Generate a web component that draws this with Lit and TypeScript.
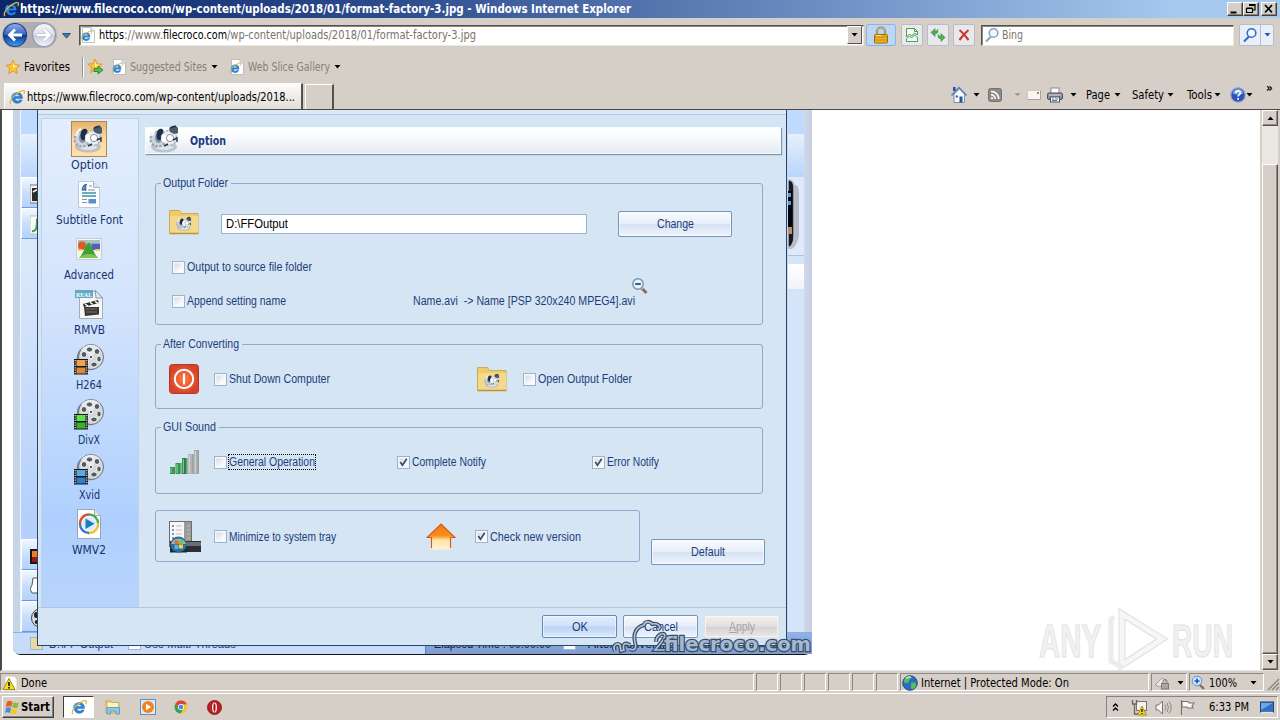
import { LitElement, html, svg, css } from 'lit';
import type { TemplateResult } from 'lit';
import { customElement, property } from 'lit/decorators.js';
import { classMap } from 'lit/directives/class-map.js';

// Text squeezed or stretched to the given number of pixels
@customElement('fit-text')
export class FitText extends LitElement {
    @property({ type: Number }) w = 0;

    static styles = css`
        :host {
            display: inline-block;
            white-space: pre;
            flex: none;
        }
        span {
            display: inline-block;
            transform-origin: 0 50%;
        }
    `;

    firstUpdated() {
        const span = this.renderRoot.querySelector('span')!;
        const natural = span.getBoundingClientRect().width;
        if (this.w && natural) {
            this.style.width = `${this.w}px`;
            span.style.transform = `scaleX(${this.w / natural})`;
        }
    }

    render() {
        return html`<span><slot></slot></span>`;
    }
}

const t = (text: string, w: number) => html`<fit-text w=${w}>${text}</fit-text>`;

const arrow = html`<svg class="arrow" width="7" height="4" viewBox="0 0 7 4"><path d="M0.5 0h6L3.5 3.6z" fill="currentColor"/></svg>`;

const ieMark = svg`
    <path d="M13.400 9.600H6c.2 1.700 1.200 2.500 2.500 2.500 1 0 1.700-.4 2.100-1.100h2.500c-.7 2.200-2.500 3.300-4.700 3.300-3.200 0-5.300-2.100-5.300-5.300s2.200-5.500 5.400-5.500c3.400 0 5.200 2.500 4.900 6.100zM6.100 7.500h4.300c-.1-1.200-.8-1.900-2.100-1.900-1.200 0-2 .7-2.200 1.900z" fill="#2a86e0" stroke="#11509f" stroke-width=".4"/>
    <path d="M2 15c-2-1.500.5-6.500 5-9.800C11 2.200 15 .600 15.500 2.200c.2.800-.2 1.800-.9 2.900" fill="none" stroke="#e8b92c" stroke-width="1.300"/>
    <path d="M5 4.500C3.500 5.500 2.800 7.500 3 9.500" fill="none" stroke="#49a8ee" stroke-width="1.500"/>`;

const ieIcon = (size = 16) => html`<svg width=${size} height=${size} viewBox="0 0 16 16">${ieMark}</svg>`;

const pageIe = html`
    <svg width="16" height="16" viewBox="0 0 16 16">
        <path d="M2.500.500H11L14.500 4v11.500h-12z" fill="#fff" stroke="#a9b6c4" stroke-width=".8"/>
        <path d="M11 .500V4h3.500" fill="#e4e8ee" stroke="#a9b6c4" stroke-width=".8"/>
        <g transform="translate(0 3) scale(.75)">${ieMark}</g>
    </svg>`;

const star = svg`<path d="M8 1l2.100 4.700 5 .5-3.800 3.400 1.100 5L8 12l-4.400 2.600 1.100-5L.900 6.200l5-.5z" fill="#ffc234" stroke="#d9932a" stroke-width=".8"/><path d="M8 3l1.300 3.500 3.200.3L8 9z" fill="#fff0a8"/>`;

const navBack = html`
    <svg width="26" height="26" viewBox="0 0 26 26">
        <defs>
            <linearGradient id="nav-back" x1="0" y1="0" x2="0" y2="1">
                <stop offset="0" stop-color="#8eb0ea"/><stop offset=".48" stop-color="#3566c4"/>
                <stop offset=".52" stop-color="#0c3796"/><stop offset="1" stop-color="#3fa4f0"/>
            </linearGradient>
        </defs>
        <circle cx="13" cy="13" r="11.500" fill="url(#nav-back)" stroke="#1f3e80" stroke-width="1.200"/>
        <path d="M20 13H8M13 7.500L7.500 13l5.500 5.500" fill="none" stroke="#fff" stroke-width="2.800"/>
    </svg>`;

const navForward = html`
    <svg width="26" height="26" viewBox="0 0 26 26">
        <defs>
            <linearGradient id="nav-fwd" x1="0" y1="0" x2="0" y2="1">
                <stop offset="0" stop-color="#f6f7fa"/><stop offset=".48" stop-color="#dcdfe8"/>
                <stop offset=".52" stop-color="#c3c9d6"/><stop offset="1" stop-color="#f6f7fb"/>
            </linearGradient>
        </defs>
        <circle cx="13" cy="13" r="11.500" fill="url(#nav-fwd)" stroke="#8f99ad" stroke-width="1.200"/>
        <path d="M6 13h12M13 7.500l5.500 5.500-5.500 5.500" fill="none" stroke="#aab1c0" stroke-width="3.600"/>
        <path d="M6 13h12M13 7.500l5.500 5.500-5.500 5.500" fill="none" stroke="#fff" stroke-width="2.600"/>
    </svg>`;

const lock = html`
    <svg width="16" height="18" viewBox="0 0 16 18">
        <path d="M4 9V5.500a4 4 0 0 1 8 0V9" fill="none" stroke="#8a7a50" stroke-width="2.200"/>
        <path d="M4 9V5.500a4 4 0 0 1 8 0V9" fill="none" stroke="#d9cfa8" stroke-width=".8"/>
        <rect x="1.500" y="8.500" width="13" height="8.500" rx="1" fill="#eeb321" stroke="#9c6c0c"/>
        <path d="M2 11h12M2 14h12" stroke="#c4860f"/>
        <path d="M3 9.500h5" stroke="#ffe88a"/>
    </svg>`;

const compat = html`
    <svg width="16" height="16" viewBox="0 0 16 16">
        <path d="M2.500 1.500h8l3 3V8l-3-2-3 3-2-2-3 3zM2.500 12l3-3 2 2 3-3 3 2.500v4h-11z" fill="#f2fbf2" stroke="#4b9c55"/>
        <path d="M10.500 1.500v3h3" fill="none" stroke="#4b9c55"/>
    </svg>`;

const refresh = html`
    <svg width="16" height="16" viewBox="0 0 16 16" fill="#4fae50" stroke="#247a30" stroke-width=".5">
        <path d="M5 1.500L1 5.500l4 4v-2.700c1.200 0 2-.3 2.800-1.300V2.500C7 3.800 6.300 4.200 5 4.200z"/>
        <path d="M11 6.500l4 4-4 4v-2.700c-1.200 0-2-.3-2.800-1.300V7.500C9 8.800 9.700 9.200 11 9.200z"/>
    </svg>`;

const stop = html`<svg width="14" height="14" viewBox="0 0 14 14"><path d="M2.500 2c3 2.500 6 6 9 10M11.500 2C8 5 5 8.500 2.500 12" stroke="#c83a3a" stroke-width="2.200" fill="none"/></svg>`;

const lens = (color: string) => html`
    <svg width="16" height="16" viewBox="0 0 16 16">
        <path d="M7 9.500L2 14.500" stroke=${color} stroke-width="2.200"/>
        <circle cx="9.500" cy="6" r="4.300" fill="#f0f7ff" stroke=${color} stroke-width="1.600"/>
    </svg>`;

const home = html`
    <svg width="18" height="18" viewBox="0 0 18 18">
        <path d="M4 8v8.500h10.500V8L9.500 3z" fill="#f5f8fc" stroke="#7d90b0"/>
        <path d="M1.500 9.500l7.500-8 7.500 8" fill="none" stroke="#5f7cb0" stroke-width="1.500"/>
        <rect x="3" y="1" width="2.500" height="4" fill="#2b4fa0"/>
        <rect x="9.500" y="10.500" width="3" height="6" fill="#1c5d94"/>
        <rect x="5.800" y="9.500" width="2" height="2" fill="#2b4fa0"/>
    </svg>`;

const rss = html`
    <svg width="14" height="14" viewBox="0 0 14 14">
        <rect x=".5" y=".5" width="13" height="13" rx="2" fill="#8d8b88" stroke="#75726e"/>
        <path d="M3 3.500A7.500 7.500 0 0 1 10.800 11M3 6.800A4.200 4.200 0 0 1 7.300 11" fill="none" stroke="#fff" stroke-width="1.500"/>
        <circle cx="4" cy="10.200" r="1.100" fill="#fff"/>
    </svg>`;

const mail = html`
    <svg width="14" height="10" viewBox="0 0 14 10">
        <rect x=".5" y=".5" width="13" height="9" fill="#f8f5f3" stroke="#cfc9c6"/>
        <path d="M.500 9.500h13v-9" fill="none" stroke="#a8a29e"/>
        <rect x="10" y="2" width="2" height="2" fill="#d06a6a"/>
    </svg>`;

const printer = html`
    <svg width="16" height="16" viewBox="0 0 16 16">
        <rect x="4" y="1" width="8" height="6" fill="#fff" stroke="#8a8a92"/>
        <rect x=".5" y="6" width="15" height="6.500" rx="1.500" fill="#8f9097" stroke="#4e4f57"/>
        <path d="M2 8h12" stroke="#d5d7dc"/>
        <rect x="3.500" y="10" width="9" height="5" fill="#fff" stroke="#50525c"/>
        <path d="M5 12h2m1 0h3M5 13.500h5" stroke="#3c7ac0"/>
    </svg>`;

const help = html`
    <svg width="16" height="16" viewBox="0 0 16 16">
        <circle cx="8" cy="8" r="7.200" fill="#2f55b4" stroke="#8fa2cf" stroke-width="1.200"/>
        <path d="M2.500 6a5.800 5.800 0 0 1 11 0C11 8 5 8 2.500 6z" fill="#7d9de0"/>
        <path d="M5.700 6.200c0-3.200 4.700-3.100 4.700-.3 0 1.700-2.300 1.700-2.300 3.500M8.100 11v1.800" fill="none" stroke="#fff" stroke-width="1.700"/>
    </svg>`;

const gears = svg`
    <ellipse cx="15" cy="23" rx="13" ry="5.500" fill="#b4bcc5" opacity=".85"/>
    <ellipse cx="15" cy="23" rx="9" ry="3" fill="#dfe4e9"/>
    <circle cx="9" cy="15" r="7.500" fill="#cdd3da" stroke="#98a1ac" stroke-dasharray="2.500 1.500" stroke-width="2"/>
    <ellipse cx="9.500" cy="14" rx="3.500" ry="5" fill="#7f93a8"/>
    <path d="M9 6c4-3 7 0 5 5s-2 6-5 5c-2-2-2-7 0-10z" fill="#1b2f4a"/>
    <path d="M3 12c1-4 3-6 5-7" stroke="#f7f9fb" stroke-width="2" fill="none"/>
    <circle cx="20" cy="14" r="7.500" fill="#e9edf1" stroke="#a9b1bb" stroke-dasharray="2.500 1.500" stroke-width="1.600"/>
    <path d="M13 10l5 2-2 7-4-3z" fill="#fff"/>
    <circle cx="21" cy="14" r="3.600" fill="#fff" stroke="#8894a1"/>
    <path d="M20 5c2-4 7-4 9-1v5c-3 2-6 0-8-1z" fill="#4a5b6d"/>
    <path d="M21 4l6-2M24 16l4-2v4M19 20l-4 2" stroke="#25384d" stroke-width="1.400" fill="none"/>`;

const gearsIcon = html`<svg width="32" height="30" viewBox="0 0 32 30">${gears}</svg>`;

const subtitleIcon = html`
    <svg width="22" height="27" viewBox="0 0 22 27">
        <path d="M.500.500h15l6 6v20H.500z" fill="#fbfdff" stroke="#c2c9d6"/>
        <path d="M15.500.500v6h6" fill="#dde4ee" stroke="#a8b2c0"/>
        <path d="M9 3.500c-4 0-5 5-4.500 5.500 2 0 3-2 3-5v6" fill="none" stroke="#3e6fa5" stroke-width="1.600"/>
        <path d="M11 5h3M10 9h7" stroke="#7b93ad"/>
        <path d="M4 12h14M4 15h14" stroke="#3f9199" stroke-width="1.400"/>
        <path d="M4 18.500h5M4 21.500h5" stroke="#8796a8"/>
        <rect x="10.500" y="18" width="7.500" height="4.500" fill="#5a8fc9"/>
    </svg>`;

const advancedIcon = html`
    <svg width="26" height="22" viewBox="0 0 26 22">
        <rect x=".5" y=".5" width="25" height="21" fill="#f4f8ea" stroke="#c3ccd8"/>
        <rect x="2" y="2" width="22" height="10" fill="#82a9e6"/>
        <path d="M2 2h22v3H2z" fill="#a8c4b4"/>
        <circle cx="6" cy="7.500" r="4" fill="#e05a26"/>
        <rect x="16" y="6" width="8" height="6" fill="#5659cf"/>
        <path d="M3 20c4-3 7-15 10-15 3 1 5 12 9 15z" fill="#3fa033"/>
        <path d="M3 20c3-3 6-4 10-4s7 1 9 4z" fill="#80c455"/>
        <path d="M2 12h4M19 12h5" stroke="#ecd158" stroke-width="2"/>
    </svg>`;

const rmvbIcon = html`
    <svg width="28" height="31" viewBox="0 0 28 31">
        <path d="M4.500 2.500h17l6 6v21h-23z" fill="#f6f6f4" stroke="#a6adb5"/>
        <path d="M20 1l7.500 8H21z" fill="#dfe7ec" stroke="#8f9ba6"/>
        <rect x="0" y="1" width="18" height="8" fill="#65a8c6"/>
        <text class="tiny" x="1" y="7.800" textLength="16" lengthAdjust="spacingAndGlyphs">REAL</text>
        <path d="M8 15l15-4 .8 3-15 4z" fill="#2b2b2b"/>
        <path d="M10 15l3 2M15 13.500l3 2M20 12.300l3 2" stroke="#fff" stroke-width="1.500"/>
        <path d="M9 18h15v7.500L10 27z" fill="#3a3635"/>
        <path d="M11 20h11M11 23h11" stroke="#7b736c"/>
    </svg>`;

const reelIcon = (color: string, dark: string) => html`
    <svg width="32" height="32" viewBox="0 0 32 32">
        <circle cx="16" cy="15" r="12.300" fill="#7d858f"/>
        <circle cx="18" cy="14" r="12.500" fill="#d3d6da" stroke="#6c737b"/>
        <path d="M8 7a12 12 0 0 1 19-1l-9 8z" fill="#e6e9ec"/>
        <g fill="#555b63" stroke="#fff" stroke-width=".9">
            <ellipse cx="16.500" cy="6.500" rx="3.200" ry="2.600"/><ellipse cx="24" cy="8.500" rx="2.800" ry="3"/>
            <ellipse cx="11" cy="11.500" rx="2.800" ry="3"/><ellipse cx="26" cy="16" rx="2.300" ry="3"/>
            <ellipse cx="21" cy="21.500" rx="3.200" ry="2.600"/><ellipse cx="13" cy="19" rx="2.600" ry="2.600"/>
        </g>
        <circle cx="18" cy="14" r="1.800" fill="#555" stroke="#fff"/>
        <rect x="1" y="16" width="14" height="15.500" fill="#15181c"/>
        <rect x="3.500" y="17" width="9" height="6" fill=${color}/><rect x="3.500" y="24.500" width="9" height="6" fill=${dark}/>
        <path d="M2.200 17v14M13.800 17v14" stroke="#e8e8e8" stroke-dasharray="1.200 1.200" stroke-width="1.200"/>
    </svg>`;

const wmvIcon = html`
    <svg width="24" height="30" viewBox="0 0 24 30">
        <path d="M.500.500h17l6 6v23H.500z" fill="#fcfdff" stroke="#9da4ae"/>
        <path d="M17.500.500v6h6" fill="#dbe2ea" stroke="#a6aeb9"/>
        <g fill="none" stroke-width="2.400">
            <path d="M3 15a9 9 0 0 1 9-9.500" stroke="#d8502c"/><path d="M12 5.500a9 9 0 0 1 9 9" stroke="#4fa653"/>
            <path d="M21 14.500a9 9 0 0 1-9 9.500" stroke="#f2c330"/><path d="M12 24a9 9 0 0 1-9-9" stroke="#3f6fd0"/>
        </g>
        <circle cx="12" cy="14.700" r="7" fill="#d9edfb"/>
        <path d="M8.500 9.500l9 5.200-9 5.300z" fill="#1f7ac4"/>
    </svg>`;

const folderIcon = html`
    <svg class="folder" width="30" height="26" viewBox="0 0 30 26">
        <path d="M.500 24V1.500h10l2 3h16.500V24z" fill="#f0cb6c" stroke="#cfaa55"/>
        <path d="M1 7h28v17.500H1z" fill="#f5d98a"/>
        <path d="M.500 24.500h29" stroke="#b9923f" stroke-width="1.500"/>
        <g transform="translate(7 7) scale(.52)">${gears}</g>
    </svg>`;

const powerIcon = html`
    <svg width="30" height="30" viewBox="0 0 30 30">
        <defs><radialGradient id="pw"><stop offset="0" stop-color="#ff7b45"/><stop offset="1" stop-color="#d9412a"/></radialGradient></defs>
        <rect x=".5" y=".5" width="29" height="29" rx="3" fill="url(#pw)" stroke="#a93a2a"/>
        <circle cx="15" cy="15" r="9.200" fill="none" stroke="#fff" stroke-width="2"/>
        <path d="M15 9.500v11" stroke="#fff" stroke-width="2.200"/>
    </svg>`;

const signalIcon = html`
    <svg width="30" height="26" viewBox="0 0 30 26">
        <rect x="1" y="18" width="4" height="7" fill="#2d9a4c"/><rect x="6.500" y="14" width="5" height="11" fill="#2d9a4c"/>
        <rect x="13" y="9" width="4.500" height="16" fill="#1f8740"/><rect x="19" y="5" width="4.500" height="20" fill="#b3b5b4"/>
        <rect x="25" y="1" width="4.500" height="24" fill="#a9abaa"/>
        <path d="M2 24v-5M8 24v-9M14.300 24V10" stroke="#8fdb9d"/>
        <path d="M20.300 24V6M26.300 24V2" stroke="#dcdddd"/>
        <path d="M5.500 25v-7M12 25V14M18 25V9M24 25V5M30 25V1" stroke="#6b7a70"/>
    </svg>`;

const trayIcon = html`
    <svg width="34" height="33" viewBox="0 0 34 33">
        <rect x="1.500" y="1.500" width="22" height="25" fill="#9a9a9a" stroke="#6e6e6e"/>
        <rect x="2" y="2" width="14" height="24" fill="#f7f7f7"/>
        <path d="M4 6h2M4 10h2M4 14h2M4 18h2" stroke="#5a6fc0" stroke-width="1.300"/>
        <path d="M8 6h6M8 10h6M8 14h6M8 18h6M19 6h3M19 10h3M19 14h3M19 18h3" stroke="#c2c2c2"/>
        <rect x="2" y="21" width="31" height="11" fill="#2c2f33"/><path d="M16 22h17v4H16z" fill="#6b6e72"/>
        <circle cx="10.500" cy="24.500" r="8" fill="#2d6f9b"/><path d="M3 24a8 8 0 0 1 15 0z" fill="#8fb9c8"/>
        <path d="M2 32.500v-5c4 6 13 6 17 0v5z" fill="#132c3c"/>
        <rect x="6.500" y="20.500" width="4" height="4" fill="#e8692c"/><rect x="11" y="20" width="4" height="4" fill="#7fc243"/>
        <rect x="6.500" y="25" width="4" height="4" fill="#4fb0e8"/><rect x="11" y="24.500" width="4" height="4" fill="#f7d139"/>
    </svg>`;

const upIcon = html`
    <svg width="30" height="28" viewBox="0 0 30 28">
        <defs>
            <linearGradient id="up" x1="0" y1="0" x2="0" y2="1">
                <stop offset="0" stop-color="#f07a14"/><stop offset=".45" stop-color="#fb8c1c"/>
                <stop offset=".62" stop-color="#ffe6a6"/><stop offset=".9" stop-color="#fff0cc"/><stop offset="1" stop-color="#f3ebe0"/>
            </linearGradient>
        </defs>
        <path d="M15 1L29 14.500h-4.500V27h-19V14.500H1z" fill="url(#up)"/>
        <path d="M5.500 25V14.500H1L15 1l14 13.500h-4.500V25" fill="none" stroke="#d05a16" stroke-width="1.100"/>
    </svg>`;

const zoomOut = html`
    <svg class="cursor" width="18" height="18" viewBox="0 0 18 18">
        <path d="M10.500 11l5 5" stroke="#8a6a50" stroke-width="2.800"/>
        <path d="M10.200 10.400l1.600 1.600" stroke="#d8d2c4" stroke-width="1.600"/>
        <circle cx="7" cy="7" r="5.200" fill="#e3f3fc" stroke="#7b93ab" stroke-width="1.400"/>
        <path d="M4.200 7h5.600" stroke="#1f4c8c" stroke-width="1.800"/>
    </svg>`;

const warning = html`
    <svg width="16" height="16" viewBox="0 0 16 16">
        <path d="M3 1h9l3 3v11H3z" fill="#fff" stroke="#c5c2bb" stroke-width=".8"/>
        <path d="M7 3.500l6 11H1z" fill="#f7dc1f" stroke="#a08c0a"/>
        <path d="M7 7v4M7 12v1.500" stroke="#111" stroke-width="1.600"/>
    </svg>`;

const globe = html`
    <svg width="16" height="16" viewBox="0 0 16 16">
        <circle cx="8" cy="8" r="7.300" fill="#2a6cc2" stroke="#2b4c86"/>
        <path d="M2 5c2-4 6-4 7-3 1 2-2 2-2 4s-3 3-5 1zM9 8c3-2 6 0 5 3s-4 4-5 2 1-3 0-5z" fill="#4fc05c"/>
        <path d="M4 3.500c2-2 5-1.500 5-1" stroke="#c7f0d0" fill="none" stroke-width="1.400"/>
    </svg>`;

const flagLogo = html`
    <svg width="15" height="15" viewBox="0 0 15 15">
        <path d="M2 1.500c2-1 3.500-.8 5.500.3L6.300 7C4.500 6 3 6 .8 6.800z" fill="#ee5b26"/>
        <path d="M8.300 2.200c2 1 3.500 1 5.500.2L12.600 7.500c-2 .8-3.500.7-5.500-.2z" fill="#86bf3b"/>
        <path d="M1.100 7.800c2-.9 3.200-.8 5 .3l-1.200 5C3.500 12 2 12 0 12.900z" fill="#3e8fe0"/>
        <path d="M6.900 8.500c2 1 3.600 1 5.500.2l-1.200 5c-2 .8-3.600.7-5.500-.3z" fill="#f9c623"/>
    </svg>`;

const explorerIcon = html`
    <svg width="16" height="16" viewBox="0 0 16 16">
        <path d="M1 2h5l1 1.500h7V14H1z" fill="#f2d77a" stroke="#c2a048" stroke-width=".8"/>
        <path d="M3 4h10v4H3z" fill="#fff3b5"/><path d="M2 8.500h12.500V15H11v-3H5.500v3H2z" fill="#8cc8ea" stroke="#4b95c2" stroke-width=".8"/>
    </svg>`;

const wmpIcon = html`
    <svg width="16" height="16" viewBox="0 0 16 16">
        <rect x=".5" y=".5" width="15" height="15" fill="#d9ecfb" stroke="#5b92c9"/>
        <circle cx="8" cy="8" r="6" fill="#f28418"/><path d="M6 4.800L11.200 8 6 11.200z" fill="#fff"/>
    </svg>`;

const chromeIcon = html`
    <svg width="14" height="14" viewBox="0 0 14 14">
        <circle cx="7" cy="7" r="6.500" fill="#f3c52e"/>
        <path d="M1.300 4A6.500 6.500 0 0 1 12.900 4.300L7 4.500 4.200 8z" fill="#db4437"/>
        <path d="M1.300 4A6.500 6.500 0 0 0 6.500 13.500L9.200 9 4.500 8.300z" fill="#2ca35a"/>
        <circle cx="7" cy="7" r="3" fill="#fff"/><circle cx="7" cy="7" r="2.300" fill="#4a87e8"/>
    </svg>`;

const operaIcon = html`
    <svg width="15" height="15" viewBox="0 0 15 15">
        <circle cx="7.500" cy="7.500" r="7" fill="#bf1f23" stroke="#7c1013" stroke-width=".8"/>
        <ellipse cx="7.500" cy="7.500" rx="2.400" ry="5" fill="#fff"/><ellipse cx="7.500" cy="7.500" rx="1.100" ry="4.200" fill="#9c1518"/>
    </svg>`;

const SIDEBAR: { label: string; w: number; icon: TemplateResult }[] = [
    { label: 'Option', w: 37, icon: gearsIcon },
    { label: 'Subtitle Font', w: 67, icon: subtitleIcon },
    { label: 'Advanced', w: 50, icon: advancedIcon },
    { label: 'RMVB', w: 31, icon: rmvbIcon },
    { label: 'H264', w: 26, icon: reelIcon('#f2a24c', '#d98a3a') },
    { label: 'DivX', w: 22, icon: reelIcon('#5fe04c', '#37b32c') },
    { label: 'Xvid', w: 21, icon: reelIcon('#5aa9e6', '#2f7fc4') },
    { label: 'WMV2', w: 34, icon: wmvIcon }
];

@customElement('app-root')
export class AppRoot extends LitElement {
    static styles = css`
        :host {
            display: flex;
            flex-direction: column;
            width: 1280px;
            height: 720px;
            overflow: hidden;
            background: #d5cfc7;
            font: 11.5px/14px 'DejaVu Sans Condensed', 'DejaVu Sans', sans-serif;
            color: #000;
        }
        * {
            box-sizing: border-box;
        }
        svg {
            display: block;
            flex: none;
        }
        .row {
            display: flex;
            align-items: center;
        }
        .titlebar {
            height: 18px;
            flex: none;
            padding: 0 3px;
            color: #fff;
            font-weight: bold;
            background: linear-gradient(90deg, #0b2669, #2c4b8d 30%, #6e90c4 65%, #a5c9ef 92%);
        }
        .titlebar .title {
            margin-left: 1px;
            flex: 1;
        }
        .winbtn {
            width: 16px;
            height: 14px;
            background: #d5cfc7;
            border: 1px solid;
            border-color: #fff #404040 #404040 #fff;
            box-shadow: inset -1px -1px #86827c;
        }
        .winbtn.close {
            margin-left: 2px;
        }
        .nav {
            height: 32px;
            flex: none;
            padding: 2px 6px 0 2px;
        }
        .circles {
            width: 55px;
            gap: 3px;
            border-radius: 13px;
            background: #b0aeb2;
        }
        .nav > .arrow {
            color: #1f4a80;
            margin: 2px 8px 0 5px;
        }
        .address,
        .search {
            height: 21px;
            background: #fff;
            border: 1px solid;
            border-color: #55524d #eae6e0 #eae6e0 #55524d;
            box-shadow: inset 1px 1px #8a8680;
            color: #77736d;
        }
        .address {
            width: 787px;
            padding: 0 1px 0 0;
        }
        .address b {
            font-weight: normal;
            color: #000;
        }
        .address .url {
            flex: 1;
            margin-left: 3px;
        }
        .combo {
            width: 15px;
            height: 18px;
            display: grid;
            place-items: center;
            color: #000;
            background: #d5cfc7;
            border: 1px solid;
            border-color: #fff #55524d #55524d #fff;
        }
        .tool {
            width: 22px;
            height: 22px;
            margin-left: 4px;
            display: grid;
            place-items: center;
            background: #e9e9ec;
            border: 1px solid #b7bccb;
            border-radius: 2px;
        }
        .tool.lock {
            width: 30px;
            margin-left: 2px;
            margin-right: 1px;
            background: #bdd6f5;
            border-color: #8fb4e4;
        }
        .search {
            width: 254px;
            margin-left: 6px;
            padding-left: 2px;
            gap: 2px;
        }
        .go {
            margin-left: 5px;
            width: 35px;
            height: 22px;
            display: grid;
            grid-template-columns: 20px 1px 1fr;
            place-items: center;
            background: #e9eef7;
            border: 1px solid #b7bccb;
            border-radius: 2px;
            color: #1f5cb8;
        }
        .go i {
            width: 1px;
            height: 20px;
            background: #b7bccb;
        }
        .favorites {
            height: 32px;
            flex: none;
            padding: 1px 5px 0;
            color: #86817b;
        }
        .favorites .dark {
            color: #000;
            margin-left: 3px;
        }
        .favorites .arrow {
            color: #000;
            margin-left: 4px;
        }
        .favorites .first {
            margin: 0 3px 0 7px;
        }
        .favorites .second {
            margin: 0 3px 0 11px;
        }
        .sep {
            width: 2px;
            height: 20px;
            margin: 0 3px 0 12px;
            background: #96928c;
            border-right: 1px solid #fff;
        }
        .tabs {
            height: 27px;
            flex: none;
            padding: 1px 6px 0 4px;
            justify-content: space-between;
        }
        .strip {
            display: flex;
            height: 26px;
            gap: 2px;
        }
        .tab {
            width: 299px;
            padding: 0 0 0 4px;
            gap: 2px;
            background: linear-gradient(#fdfcfb, #e2ded8);
            border: 1px solid #fff;
            border-right: 2px solid #55524d;
            border-bottom: 0;
        }
        .newtab {
            width: 29px;
            margin-top: 1px;
            border: 1px solid #fff;
            border-right: 2px solid #55524d;
            border-bottom: 0;
        }
        .cmds {
            display: grid;
            grid-template-columns: 23px 15px 26px 13px 20px 23px 16px 28px 18px 35px 20px 27px 16px 16px 20px 8px;
            align-items: center;
            margin-top: -3px;
        }
        .cmds .dim {
            color: #a09b94;
        }
        .cmds .more {
            margin-top: -14px;
        }
        .browser {
            height: 562px;
            flex: none;
            display: flex;
            background: #fff;
            border: solid #4c4a46;
            border-width: 1px 0 0 2px;
            border-bottom: 1px solid #e8e5df;
            position: relative;
            overflow: hidden;
        }
        .scroll {
            width: 16px;
            margin-left: auto;
            margin-right: 2px;
            height: 560px;
            background: #ebe8e4;
            display: flex;
            flex-direction: column;
            outline: 2px solid #d5cfc7;
        }
        .sbtn {
            height: 16px;
            display: grid;
            place-items: center;
            background: #d5cfc7;
            border: 1px solid;
            border-color: #fff #55524d #55524d #fff;
            box-shadow: inset -1px -1px #908c86;
        }
        .sbtn.up svg {
            transform: rotate(180deg);
        }
        .thumb {
            margin-top: 38px;
            flex: 1;
            background: #d5cfc7;
            border: 1px solid;
            border-color: #fff #55524d #55524d #fff;
            box-shadow: inset -1px -1px #908c86;
        }

        /* Main window behind the dialog */
        .shot {
            width: 799px;
            height: 545px;
            margin-left: 11px;
            flex: none;
            display: grid;
            grid-template: 522px 22px / 7px 18px 1fr 16px 8px;
            background: #c5d5ee;
            border-bottom: 1px solid #10141c;
            font-family: 'Liberation Sans', Arial, sans-serif;
            font-size: 12px;
            color: #1f3f80;
            position: relative;
            border-radius: 0 0 8px 8px;
        }
        .frame {
            background: #c6d4e8;
        }
        .frame.right {
            background: linear-gradient(90deg, #d0d8ea, #c4cde3);
        }
        .left,
        .right-pane {
            display: flex;
            flex-direction: column;
        }
        .left {
            border-left: 1px solid #edf4ff;
            background: linear-gradient(#dbe8fa, #dbe8fa 30%, #b4d0fb 78%);
        }
        .cap {
            height: 24px;
            background: #c0dafd;
        }
        .band {
            height: 43px;
            background: linear-gradient(#e6f0fd, #b9d5fb);
        }
        .cat {
            height: 31px;
            padding: 6px 0 0 8px;
            overflow: hidden;
            background: linear-gradient(#f2f7fe, #c9dffc 50%, #b5d2fb);
            border: 1px solid #fff;
            border-bottom-color: #6f9bd8;
        }
        .gap {
            flex: 1;
        }
        .right-pane {
            grid-column: 4;
            background: #d5e4f8;
        }
        .phone {
            height: 79px;
            background: #dfe9f8;
            border-bottom: 1px solid #a9c2e6;
            overflow: hidden;
        }
        .rtab {
            height: 25px;
            margin-top: 8px;
            background: linear-gradient(#fff, #eff4fb);
        }
        .main-status {
            grid-column: 1 / -1;
            display: grid;
            grid-template-columns: 17px 19px 79px 16px 281px 1fr;
            align-items: center;
            background: #c8dcfa;
            border-top: 1px solid #8db0e3;
            border-radius: 0 0 6px 6px;
        }
        .chip {
            width: 13px;
            height: 13px;
            background: #fff;
            border: 1px solid #9db6d8;
        }
        .chip.gold {
            background: #ead9a0;
        }
        .main-status .dark {
            align-self: stretch;
            padding-left: 8px;
            gap: 12px;
            color: #14213f;
            background: linear-gradient(#8fb2ea, #7f9ccb);
            border-left: 1px solid #5f82bb;
        }

        /* Option dialog */
        .dialog {
            position: absolute;
            left: 24px;
            top: 0;
            width: 750px;
            height: 536px;
            display: flex;
            flex-direction: column;
            background: #d6e5f3;
            border: 1px solid #27466e;
            border-top: 0;
            color: #1c3d7c;
        }
        .dlg-top {
            height: 5px;
            background: #dce9f7;
            border-bottom: 1px solid #b3c9e2;
        }
        .dlg-body {
            height: 493px;
            padding: 3px 3px 0;
            display: flex;
            border-bottom: 1px solid #b0c6e2;
        }
        .side {
            width: 98px;
            display: flex;
            flex-direction: column;
            background: linear-gradient(#e3eefd, #d2e3fc 40%, #afd0ff 82%, #b8d4fc);
            border: 1px solid #c0d2ea;
            border-bottom: 0;
            color: #16336e;
            font-family: 'DejaVu Sans Condensed', 'DejaVu Sans', sans-serif;
        }
        .item {
            height: 55px;
            display: flex;
            flex-direction: column;
            align-items: center;
            padding: 2px 2px 0 0;
        }
        .pic {
            width: 36px;
            height: 36px;
            display: grid;
            place-items: center;
            margin-bottom: 1px;
        }
        .pic.on {
            background: linear-gradient(#e8b46c, #ffd9a0 50%, #ffe1a8);
            border: 1px solid #a58a5e;
        }
        .main {
            flex: 1;
            display: flex;
            flex-direction: column;
            padding: 9px 0 0 6px;
        }
        .head {
            width: 636px;
            height: 27px;
            gap: 9px;
            padding-left: 3px;
            background: linear-gradient(#fff, #f8fafc 40%, #e4ebf2);
            box-shadow: 1px 1px 1px #7f93aa;
            border: 1px solid #f8fbfe;
            font: bold 11.5px/14px 'DejaVu Sans Condensed', 'DejaVu Sans', sans-serif;
            color: #1a3a80;
        }
        .head svg {
            margin-top: -4px;
        }
        fieldset {
            width: 608px;
            margin: 0 0 0 10px;
            padding: 0;
            border: 1px solid #8fa9cb;
            border-radius: 3px;
            min-width: 0;
        }
        legend {
            margin-left: 5px;
            padding: 0 3px 0 2px;
            height: 14px;
        }
        .folder-set {
            margin-top: 22px;
            height: 149px;
        }
        .after-set {
            margin-top: 12px;
            height: 72px;
        }
        .sound-set {
            margin-top: 11px;
            height: 74px;
        }
        .last-set {
            width: 485px;
            height: 52px;
        }
        .last-row {
            display: flex;
            margin-top: 16px;
            gap: 11px;
        }
        .last-row .btn {
            margin-top: 29px;
        }
        .path-row {
            display: grid;
            grid-template-columns: 52px 397px 114px;
            align-items: center;
            padding: 21px 0 0 13px;
            height: 47px;
        }
        .path-row .folder {
            margin-top: -4px;
        }
        .path {
            width: 366px;
            height: 20px;
            padding: 2px 4px;
            background: #fff;
            border: 1px solid #9bb1cc;
            color: #000;
        }
        .btn {
            width: 114px;
            height: 26px;
            display: grid;
            place-items: center;
            background: linear-gradient(#f7fafe, #e8effa 48%, #d6e2f3 52%, #eef5fd);
            border: 1px solid #7793b8;
            border-radius: 2px;
            box-shadow: inset 0 0 0 1px #fff8;
        }
        .check {
            display: flex;
            align-items: center;
            gap: 2px;
            height: 14px;
        }
        .box {
            width: 13px;
            height: 13px;
            display: grid;
            place-items: center;
            background: linear-gradient(135deg, #ccd1da, #fafbfc 70%);
            border: 1px solid #9fb2cc;
            box-shadow: inset 0 0 0 1.5px #f5f9fd;
        }
        .focus {
            outline: 1px dotted #000;
        }
        .src {
            margin: 23px 0 0 16px;
        }
        .append {
            display: grid;
            grid-template-columns: 241px 1fr;
            margin: 20px 0 0 16px;
        }
        .two,
        .three,
        .last {
            display: grid;
            align-items: center;
        }
        .two {
            grid-template-columns: 45px 263px 46px 1fr;
            padding: 13px 0 0 13px;
        }
        .three {
            grid-template-columns: 45px 183px 195px 1fr;
            padding: 15px 0 0 13px;
        }
        .last {
            grid-template-columns: 46px 212px 49px 1fr;
            padding: 9px 0 0 12px;
        }
        .dlg-foot {
            display: flex;
            justify-content: flex-end;
            gap: 6px;
            padding: 7px 7px 0;
        }
        .dlg-foot .btn {
            width: 75px;
            height: 23px;
        }
        .dlg-foot .ok {
            background: linear-gradient(#e4eefb, #cfe0f8 48%, #b9d2f5 52%, #dceafc);
            border-color: #5f86bd;
        }
        .dlg-foot .off {
            background: linear-gradient(#f2f0ef, #e2dedd 50%, #d5d2d3 52%, #e9e7e7);
            border-color: #e3e3e6;
            color: #a3a3a8;
        }
        .dlg-foot u {
            text-underline-offset: 1px;
        }
        .cursor {
            position: absolute;
            left: 629px;
            top: 167px;
        }
        .croco {
            position: absolute;
            left: 599px;
            top: 508px;
        }
        .croco text {
            font: bold 19px 'DejaVu Sans', sans-serif;
            fill: #a6b9d2;
            stroke: #3a4e68;
            stroke-width: 2.4px;
            paint-order: stroke;
        }
        .anyrun {
            position: absolute;
            left: 1034px;
            top: 498px;
            overflow: visible;
        }
        .anyrun text {
            font: bold 46px 'Liberation Sans', Arial, sans-serif;
            fill: #f1f1f1;
            stroke: #e2e2e2;
            stroke-width: 1px;
        }
        .tiny {
            font: bold 7px 'Liberation Serif', serif;
            fill: #fff;
        }

        .status {
            height: 20px;
            flex: none;
            margin-top: 1px;
            padding-top: 1px;
            display: grid;
            grid-template-columns: 754px repeat(6, 22px) 249px 36px 75px 16px;
            column-gap: 2px;
        }
        .cell {
            display: flex;
            align-items: center;
            gap: 3px;
            height: 18px;
            padding: 1px 0 0 1px;
            border: 1px solid;
            border-color: #8b8781 #fff #fff #8b8781;
        }
        .cell .arrow {
            margin-left: 3px;
        }
        .cell .zoomarrow .arrow {
            margin-left: 10px;
        }
        .taskbar {
            height: 27px;
            flex: none;
            margin-top: 1px;
            padding: 2px 2px 0;
            border-top: 1px solid #fff;
            display: flex;
            align-items: flex-start;
        }
        .start {
            width: 52px;
            height: 22px;
            padding-left: 2px;
            gap: 1px;
            font-weight: bold;
            border: 1px solid;
            border-color: #fff #404040 #404040 #fff;
            box-shadow: inset -1px -1px #86827c;
        }
        .launch {
            height: 22px;
            margin-left: 9px;
            display: grid;
            grid-template-columns: 31px 37px 33px 34px 32px;
            align-items: center;
            justify-items: center;
        }
        .active {
            width: 31px;
            height: 22px;
            display: grid;
            place-items: center;
            background: #fff;
            border: 1px solid;
            border-color: #404040 #fff #fff #404040;
        }
        .tray {
            width: 172px;
            height: 22px;
            margin-left: auto;
            padding-left: 4px;
            display: grid;
            grid-template-columns: 20px 24px 24px 30px 51px 18px;
            align-items: center;
            border: 1px solid;
            border-color: #86827c #fff #fff #86827c;
        }
    `;

    check(label: string, w: number, checked = false, focus = false) {
        return html`
            <label class="check">
                <span class="box">${checked
                    ? html`<svg width="9" height="9" viewBox="0 0 9 9"><path d="M1.300 4l2.200 3.300L7.700.800" fill="none" stroke="#3d4c66" stroke-width="1.700"/></svg>`
                    : ''}</span>
                <span class=${classMap({ row: true, focus })}>${t(label, w)}</span>
            </label>`;
    }

    renderChrome() {
        return html`
            <div class="titlebar row">
                ${ieIcon()}
                <div class="title row">${t('https://www.filecroco.com/wp-content/uploads/2018/01/format-factory-3.jpg - Windows Internet Explorer', 611)}</div>
                <svg class="winbtn" viewBox="0 0 14 12"><path d="M2.500 9.500h6" stroke="#000" stroke-width="2"/></svg>
                <svg class="winbtn" viewBox="0 0 14 12"><path d="M5 2.500h6M5 1.500h6V7H9M2.500 5.500h6v4h-6zM2.500 5h6" fill="none" stroke="#000" stroke-width="1.200"/></svg>
                <svg class="winbtn close" viewBox="0 0 14 12"><path d="M3 2l7 7.500M10 2L3 9.500" stroke="#000" stroke-width="1.700"/></svg>
            </div>
            <div class="nav row">
                <div class="circles row">${navBack}${navForward}</div>
                <svg class="arrow" width="9" height="6" viewBox="0 0 9 6"><path d="M.500.500h8L4.500 5.200z" fill="#3c78b8" stroke="#1f3f70" stroke-width=".8"/></svg>
                <div class="address row">
                    ${pageIe}
                    <div class="url row"><b>${t('https', 25)}</b>${t('://www.', 39)}<b>${t('filecroco.com', 64)}</b>${t('/wp-content/uploads/2018/01/format-factory-3.jpg', 249)}</div>
                    <div class="combo">${arrow}</div>
                </div>
                <div class="tool lock">${lock}</div>
                <div class="tool">${compat}</div>
                <div class="tool">${refresh}</div>
                <div class="tool">${stop}</div>
                <div class="search row">${lens('#8fa3bd')}${t('Bing', 21)}</div>
                <div class="go">${lens('#2f6fd0')}<i></i>${arrow}</div>
            </div>
            <div class="favorites row">
                <svg width="16" height="16" viewBox="0 0 16 16">${star}</svg>
                <span class="dark row">${t('Favorites', 46)}</span>
                <span class="sep"></span>
                <svg width="17" height="17" viewBox="0 0 17 17">${star}<path d="M7 10.500h4V8l5 4-5 4v-2.500H7z" fill="#51c24e" stroke="#1f7d28" stroke-width=".8"/></svg>
                <span class="first">${pageIe}</span>
                ${t('Suggested Sites', 77)}${arrow}
                <span class="second">${pageIe}</span>
                ${t('Web Slice Gallery', 82)}${arrow}
            </div>
            <div class="tabs row">
                <div class="strip">
                    <div class="tab row">${ieIcon()}${t('https://www.filecroco.com/wp-content/uploads/2018...', 268)}</div>
                    <div class="newtab"></div>
                </div>
                <div class="cmds">
                    ${home}${arrow}${rss}<span class="dim">${arrow}</span>${mail}${printer}${arrow}
                    ${t('Page', 24)}${arrow}${t('Safety', 32)}${arrow}${t('Tools', 25)}${arrow}
                    ${help}${arrow}<b class="more">»</b>
                </div>
            </div>`;
    }

    renderDialog() {
        return html`
            <div class="dialog">
                <div class="dlg-top"></div>
                <div class="dlg-body">
                    <div class="side">
                        ${SIDEBAR.map((s, i) => html`
                            <div class="item">
                                <div class=${classMap({ pic: true, on: i === 0 })}>${s.icon}</div>
                                ${t(s.label, s.w)}
                            </div>`)}
                    </div>
                    <div class="main">
                        <div class="head row">${gearsIcon}${t('Option', 36)}</div>
                        <fieldset class="folder-set">
                            <legend>${t('Output Folder', 65)}</legend>
                            <div class="path-row">
                                ${folderIcon}
                                <div class="path">${t('D:\\FFOutput', 62)}</div>
                                <div class="btn">${t('Change', 37)}</div>
                            </div>
                            <div class="src">${this.check('Output to source file folder', 125)}</div>
                            <div class="append">
                                ${this.check('Append setting name', 99)}
                                ${t('Name.avi  -> Name [PSP 320x240 MPEG4].avi', 222)}
                            </div>
                        </fieldset>
                        <fieldset class="after-set">
                            <legend>${t('After Converting', 76)}</legend>
                            <div class="two">
                                ${powerIcon}${this.check('Shut Down Computer', 101)}
                                ${folderIcon}${this.check('Open Output Folder', 94)}
                            </div>
                        </fieldset>
                        <fieldset class="sound-set">
                            <legend>${t('GUI Sound', 53)}</legend>
                            <div class="three">
                                ${signalIcon}${this.check('General Operation', 86, false, true)}
                                ${this.check('Complete Notify', 74, true)}
                                ${this.check('Error Notify', 52, true)}
                            </div>
                        </fieldset>
                        <div class="last-row">
                            <fieldset class="last-set">
                                <div class="last">
                                    ${trayIcon}${this.check('Minimize to system tray', 107)}
                                    ${upIcon}${this.check('Check new version', 91, true)}
                                </div>
                            </fieldset>
                            <div class="btn">${t('Default', 34)}</div>
                        </div>
                    </div>
                </div>
                <div class="dlg-foot">
                    <div class="btn ok">${t('OK', 16)}</div>
                    <div class="btn">${t('Cancel', 34)}</div>
                    <div class="btn off"><fit-text w="26"><u>A</u>pply</fit-text></div>
                </div>
            </div>`;
    }

    renderPage() {
        return html`
            <div class="shot">
                <div class="frame"></div>
                <div class="left">
                    <div class="cap"></div>
                    <div class="band"></div>
                    <div class="cat"><svg width="18" height="20" viewBox="0 0 18 20"><path d="M0 1h18v18H0z" fill="#f4f4f4" stroke="#777"/><path d="M2 4h16v13H2z" fill="#2c2a2b"/><path d="M3 8l5-3M9 8l5-3" stroke="#fff" stroke-width="1.500"/></svg></div>
                    <div class="cat"><svg width="18" height="20" viewBox="0 0 18 20"><path d="M0 1h18v18H0z" fill="#f8fbf8" stroke="#b5c5b5"/><path d="M2 16c4 1 5-3 5-11l6 3" fill="none" stroke="#3f9a44" stroke-width="2"/></svg></div>
                    <div class="gap"></div>
                    <div class="cat"><svg width="18" height="20" viewBox="0 0 18 20"><path d="M0 3h18v15H0z" fill="#1d1512"/><path d="M2 5h16v6H2z" fill="#f07a2a"/><path d="M2 11h16v5H2z" fill="#8c1f14"/></svg></div>
                    <div class="cat"><svg width="18" height="20" viewBox="0 0 18 20"><path d="M3 1h15v18H8l-1-3H2L0 12l2-4z" fill="#fff" stroke="#555"/></svg></div>
                    <div class="cat"><svg width="18" height="20" viewBox="0 0 18 20"><circle cx="11" cy="10" r="9.500" fill="#dadcdf" stroke="#444"/><ellipse cx="6" cy="7" rx="2" ry="3" fill="#222"/><ellipse cx="7" cy="14" rx="2.300" ry="2" fill="#222"/></svg></div>
                </div>
                <div class="right-pane">
                    <div class="cap"></div>
                    <div class="band"></div>
                    <div class="phone">
                        <svg width="16" height="78" viewBox="0 0 16 78">
                            <path d="M0 8h8q3 2 3 8v42q-1 9-7 14H0z" fill="#8f99a8" opacity=".55"/>
                            <path d="M0 3h2q4 1 4 8v48q0 8-4 11H0z" fill="#17191f" stroke="#b8bec8" stroke-width="1.500"/>
                            <path d="M0 14h4v36H0z" fill="#05070c"/><path d="M0 16h3v4H0zM0 24h3v4H0z" fill="#5f9cc8"/>
                            <path d="M0 50h4v7H0z" fill="#c08a62"/>
                        </svg>
                    </div>
                    <div class="rtab"></div>
                </div>
                <div class="frame right"></div>
                <div class="main-status">
                    <span></span><span class="chip gold"></span>${t('D:\\FF Output', 64)}
                    <span class="chip"></span>${t('Use Multi-Threads', 92)}
                    <div class="dark row">
                        ${t('Elapsed Time : 00:00:00', 117)}<span class="chip"></span>${t('After Converting : Shutdown Computer', 208)}
                    </div>
                </div>
                ${this.renderDialog()}
                <svg class="croco" width="204" height="38" viewBox="0 0 204 38">
                    <path d="M3 33c-3-5 2-9 5-6l1 6 3-1c-2-6 1-8 6-5M18 31c4 2 7 0 5-7-2-8 1-15 9-17 1-4 6-4 8-1 6-1 9 2 7 5M44 24c0-6 5-9 8-8 3 2-3 9-9 16h11" fill="none" stroke="#3a4e68" stroke-width="4"/>
                    <path d="M3 33c-3-5 2-9 5-6l1 6 3-1c-2-6 1-8 6-5M18 31c4 2 7 0 5-7-2-8 1-15 9-17 1-4 6-4 8-1 6-1 9 2 7 5M44 24c0-6 5-9 8-8 3 2-3 9-9 16h11" fill="none" stroke="#b4c5d9" stroke-width="1.600"/>
                    <text x="52" y="33" textLength="147" lengthAdjust="spacingAndGlyphs">filecroco.com</text>
                </svg>
            </div>
            ${zoomOut}
            <svg class="anyrun" width="202" height="64" viewBox="0 0 202 64">
                <text x="3" y="49" textLength="62" lengthAdjust="spacingAndGlyphs">ANY</text>
                <text x="136" y="49" textLength="61" lengthAdjust="spacingAndGlyphs">RUN</text>
                <path d="M86 6l40 25-40 26z" fill="none" stroke="#dfdfdf" stroke-width="7"/>
                <path d="M86 6l40 25-40 26z" fill="none" stroke="#f6f6f6" stroke-width="5"/>
                <path d="M78 9l-3 2v42l12 7" fill="none" stroke="#ececec" stroke-width="5"/>
            </svg>
            <div class="scroll">
                <div class="sbtn up">${arrow}</div>
                <div class="thumb"></div>
                <div class="sbtn">${arrow}</div>
            </div>`;
    }

    renderBottom() {
        return html`
            <div class="status">
                <div class="cell">${warning}${t('Done', 26)}</div>
                ${[1, 2, 3, 4, 5, 6].map(() => html`<div class="cell"></div>`)}
                <div class="cell">${globe}${t('Internet | Protected Mode: On', 148)}</div>
                <div class="cell">
                    <svg width="18" height="14" viewBox="0 0 18 14"><path d="M2 9l7-7 4 3-6 6z" fill="#e8e8e8" stroke="#a5a19b"/><rect x="8.500" y="7.500" width="7" height="5.500" fill="#aaa6a0" stroke="#7d7974"/><path d="M10 7V5.500a2 2 0 0 1 4 0V7" fill="none" stroke="#7d7974"/></svg>
                    ${arrow}
                </div>
                <div class="cell">
                    <svg width="15" height="16" viewBox="0 0 15 16"><path d="M8 9l5 5" stroke="#8a6a4a" stroke-width="2.200"/><circle cx="6" cy="6" r="4.800" fill="#cfe6fb" stroke="#5b8fd0"/><path d="M3.500 6h5M6 3.500v5" stroke="#1f58c0" stroke-width="1.700"/></svg>
                    ${t('100%', 28)}<span class="zoomarrow">${arrow}</span>
                </div>
                <svg width="14" height="18" viewBox="0 0 14 18"><path d="M2 17L13 6M6 17l7-7M10 17l3-3" stroke="#8b8781" stroke-width="1.500"/></svg>
            </div>
            <div class="taskbar">
                <div class="start row">${flagLogo}${t('Start', 29)}</div>
                <div class="launch"><span class="active">${ieIcon()}</span>${explorerIcon}${wmpIcon}${chromeIcon}${operaIcon}</div>
                <div class="tray">
                    <svg width="9" height="10" viewBox="0 0 9 10"><path d="M2 4.500L4.500 2 7 4.500M2 8.500L4.500 6 7 8.500" fill="none" stroke="#000" stroke-width="1.400"/></svg>
                    <svg width="16" height="17" viewBox="0 0 16 17"><rect x="5.500" y="2.500" width="10" height="9" fill="#f4f2ef" stroke="#77736d"/><path d="M1.500 1v4h4V1M3.500 5v10h4" fill="none" stroke="#6a665f" stroke-width="1.300"/><path d="M11 7l4.500 9h-9z" fill="#f5d51f" stroke="#9c8508" stroke-width=".8"/><path d="M11 10v3M11 14v1" stroke="#000" stroke-width="1.200"/></svg>
                    <svg width="17" height="15" viewBox="0 0 17 15"><path d="M1 5h2.500L7.500 1v13l-4-4H1z" fill="#f6f5f3" stroke="#77736d"/><path d="M10 4.500q2 3 0 6M12 3q3 4.500 0 9M14 1.500q4.500 6 0 12" fill="none" stroke="#8b8781"/></svg>
                    <svg width="16" height="16" viewBox="0 0 16 16"><path d="M2.500 1v15M3 2.500h6l1 1.500h5l-2 3 1 2H9L8 8H3z" fill="#fbfaf9" stroke="#77736d" stroke-width="1.100"/></svg>
                    ${t('6:33 PM', 40)}
                    <svg width="14" height="13" viewBox="0 0 14 13"><rect x=".5" y="1" width="13" height="10" fill="#2f6fc8" stroke="#23406f"/><path d="M1 2h12L1 9z" fill="#6fa6ea"/><path d="M1 11.500h12" stroke="#e5e5e5" stroke-width="1.500"/></svg>
                </div>
            </div>`;
    }

    render() {
        return html`
            ${this.renderChrome()}
            <div class="browser">${this.renderPage()}</div>
            ${this.renderBottom()}`;
    }
}
